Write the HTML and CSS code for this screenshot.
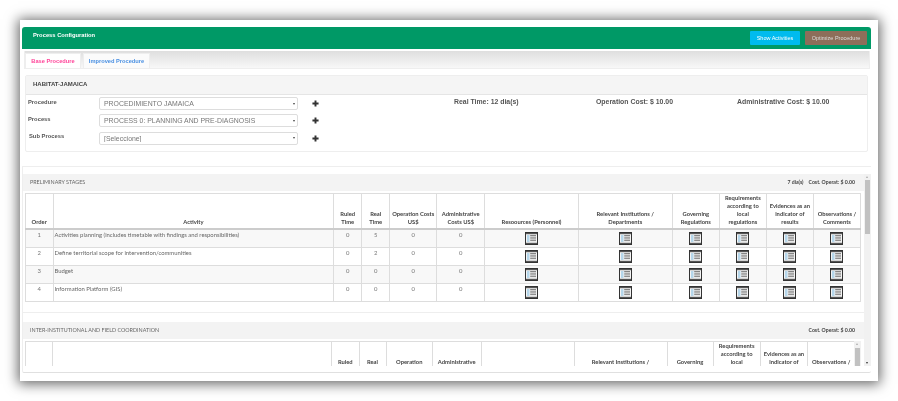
FILE: index.html
```html
<!DOCTYPE html>
<html lang="en">
<head>
    <meta charset="UTF-8">
    <title>Process Configuration</title>
    <link rel="stylesheet" href="styles.css">
</head>
<body>

<svg class="defs" width="0" height="0">
    <symbol id="doc" viewBox="0 0 13 13">
        <rect x="0.5" y="0.5" width="12" height="12" fill="#f4f4f4" stroke="#333"/>
        <rect x="1" y="1" width="11" height="1.2" fill="#555"/>
        <rect x="1" y="10.8" width="11" height="1.2" fill="#555"/>
        <rect x="2" y="3" width="2.5" height="7" fill="#b5d6ea"/>
        <path d="M5.2 3.5h5.8M5.2 5.2h5.8M5.2 6.9h5.8M5.2 8.6h5.8" stroke="#777" stroke-width="0.9" fill="none"/>
    </symbol>
    <symbol id="plus" viewBox="0 0 8 8">
        <path d="M4 0.5v7M0.5 4h7" stroke="#333" stroke-width="2.2" fill="none"/>
    </symbol>
</svg>

<div class="window">
    <div class="topbar">
        <span class="topbar-title">Process Configuration</span>
        <div class="topbar-actions">
            <button type="button" class="btn btn-info">Show Activities</button>
            <button type="button" class="btn btn-brown">Optimize Procedure</button>
        </div>
    </div>

    <div class="tabs">
        <a class="tab tab-active">Base Procedure</a>
        <a class="tab tab-other">Improved Procedure</a>
    </div>

    <div class="info-panel">
        <div class="info-heading">HABITAT-JAMAICA</div>
        <div class="info-body">
            <div class="form-rows">
                <div class="form-row">
                    <label>Procedure</label>
                    <div class="select-wrap"><select><option>PROCEDIMIENTO JAMAICA</option></select></div>
                    <svg class="plus"><use href="#plus"/></svg>
                </div>
                <div class="form-row">
                    <label>Process</label>
                    <div class="select-wrap"><select><option>PROCESS 0: PLANNING AND PRE-DIAGNOSIS</option></select></div>
                    <svg class="plus"><use href="#plus"/></svg>
                </div>
                <div class="form-row">
                    <label class="label-sub">Sub Process</label>
                    <div class="select-wrap"><select><option>[Seleccione]</option></select></div>
                    <svg class="plus"><use href="#plus"/></svg>
                </div>
            </div>
            <div class="stat stat-time">Real Time: 12 dia(s)</div>
            <div class="stat stat-op">Operation Cost: $ 10.00</div>
            <div class="stat">Administrative Cost: $ 10.00</div>
        </div>
    </div>

    <div class="stages">
        <div class="stages-list">
            <div class="stage-heading">
                <span>PRELIMINARY STAGES</span>
                <span class="stage-totals"><span class="stage-days">7 dia(s)</span>Cost. Operat: $ 0.00</span>
            </div>
            <table class="grid grid-first">
                <colgroup>
                    <col class="w-order"><col class="w-activity"><col class="w-time"><col class="w-time"><col class="w-cost"><col class="w-admin">
                    <col class="w-res"><col class="w-wide"><col class="w-cost"><col class="w-cost"><col class="w-cost"><col class="w-cost">
                </colgroup>
                <thead>
                    <tr>
                        <th>Order</th><th>Activity</th><th>Ruled<br>Time</th><th>Real<br>Time</th><th>Operation Costs<br>US$</th><th>Administrative<br>Costs US$</th>
                        <th>Resoources (Personnel)</th><th>Relevant Institutions /<br>Departments</th><th>Governing<br>Regulations</th>
                        <th>Requirements<br>according to<br>local<br>regulations</th><th>Evidences as an<br>indicator of<br>results</th><th>Observations /<br>Comments</th>
                    </tr>
                </thead>
                <tbody>
                    <tr>
                        <td>1</td><td class="activity">Activities planning (includes timetable with findings and responsibilities)</td><td>0</td><td>5</td><td>0</td><td>0</td>
                        <td class="ico"><svg><use href="#doc"/></svg></td><td class="ico"><svg><use href="#doc"/></svg></td><td class="ico"><svg><use href="#doc"/></svg></td>
                        <td class="ico"><svg><use href="#doc"/></svg></td><td class="ico"><svg><use href="#doc"/></svg></td><td class="ico"><svg><use href="#doc"/></svg></td>
                    </tr>
                    <tr>
                        <td>2</td><td class="activity">Define territorial scope for intervention/communities</td><td>0</td><td>2</td><td>0</td><td>0</td>
                        <td class="ico"><svg><use href="#doc"/></svg></td><td class="ico"><svg><use href="#doc"/></svg></td><td class="ico"><svg><use href="#doc"/></svg></td>
                        <td class="ico"><svg><use href="#doc"/></svg></td><td class="ico"><svg><use href="#doc"/></svg></td><td class="ico"><svg><use href="#doc"/></svg></td>
                    </tr>
                    <tr>
                        <td>3</td><td class="activity">Budget</td><td>0</td><td>0</td><td>0</td><td>0</td>
                        <td class="ico"><svg><use href="#doc"/></svg></td><td class="ico"><svg><use href="#doc"/></svg></td><td class="ico"><svg><use href="#doc"/></svg></td>
                        <td class="ico"><svg><use href="#doc"/></svg></td><td class="ico"><svg><use href="#doc"/></svg></td><td class="ico"><svg><use href="#doc"/></svg></td>
                    </tr>
                    <tr>
                        <td>4</td><td class="activity">Information Platform (GIS)</td><td>0</td><td>0</td><td>0</td><td>0</td>
                        <td class="ico"><svg><use href="#doc"/></svg></td><td class="ico"><svg><use href="#doc"/></svg></td><td class="ico"><svg><use href="#doc"/></svg></td>
                        <td class="ico"><svg><use href="#doc"/></svg></td><td class="ico"><svg><use href="#doc"/></svg></td><td class="ico"><svg><use href="#doc"/></svg></td>
                    </tr>
                </tbody>
            </table>
            <div class="stage-foot"></div>

            <div class="stage-heading">
                <span>INTER-INSTITUTIONAL AND FIELD COORDINATION</span>
                <span class="stage-totals">Cost. Operat: $ 0.00</span>
            </div>
            <div class="grid-clip">
                <table class="grid grid-second">
                    <colgroup>
                        <col class="s-order"><col class="s-activity"><col class="s-ruled"><col class="s-real"><col class="s-op"><col class="s-admin">
                        <col class="s-wide"><col class="s-wide"><col class="s-gov"><col class="s-cost"><col class="s-cost"><col class="s-cost">
                    </colgroup>
                    <thead>
                        <tr>
                            <th></th><th></th><th>Ruled<br>Time</th><th>Real<br>Time</th><th>Operation<br>Costs</th><th>Administrative<br>Costs</th>
                            <th></th><th>Relevant Institutions /<br>Departments</th><th>Governing<br>Regulations</th>
                            <th>Requirements<br>according to<br>local<br>regulations</th><th>Evidences as an<br>indicator of<br>results</th><th>Observations /<br>Comments</th>
                        </tr>
                    </thead>
                </table>
                <div class="scrollbar scrollbar-inner"><span class="arrow-up"></span><span class="thumb"></span></div>
            </div>
        </div>
        <div class="scrollbar scrollbar-outer"><span class="arrow-up"></span><span class="thumb"></span><span class="arrow-down"></span></div>
    </div>
</div>

</body>
</html>
```

FILE: styles.css
```css
html, body {
    margin: 0;
    height: 401px;
    overflow: hidden;
    background: #fff;
}
body {
    padding: 20px 20px 0 20px;
    box-sizing: border-box;
    font-family: "Liberation Sans", Arial, sans-serif;
}
.defs {
    position: absolute;
}
.window {
    width: 858px;
    height: 361px;
    box-sizing: border-box;
    padding: 7px 7px 0 2px;
    background: #fff;
    box-shadow: 0 1px 12px 2px rgba(0, 0, 0, 0.6);
    overflow: hidden;
    filter: blur(0.3px);
}

/* green bar */
.topbar {
    height: 22px;
    background: #009966;
    border-radius: 3px 3px 0 0;
    display: flex;
    justify-content: space-between;
    padding: 4px 4px 0 11px;
    box-sizing: border-box;
}
.topbar-title {
    color: #fff;
    font-size: 5.8px;
    font-weight: bold;
    line-height: 8px;
}
.topbar-actions {
    display: flex;
    gap: 5px;
}
.btn {
    height: 14px;
    padding: 0;
    border: none;
    border-radius: 1px;
    color: #fff;
    font-family: "Liberation Sans", Arial, sans-serif;
    font-size: 5.5px;
}
.btn-info {
    width: 50px;
    background: #00bbee;
}
.btn-brown {
    width: 62px;
    background: #8d6e5a;
    color: #ddd;
}

/* tabs */
.tabs {
    margin: 2px 1px 0 2px;
    height: 18px;
    box-sizing: border-box;
    padding: 2px 0 0 0;
    display: flex;
    gap: 2px;
    background: linear-gradient(#dedede, #f8f8f8);
    border: 1px solid #eee;
    border-top: none;
}
.tab {
    display: block;
    background: #fff;
    font-size: 5.7px;
    font-weight: bold;
    line-height: 15px;
    text-align: center;
    border: 1px solid #eee;
    border-bottom: none;
}
.tab-active {
    width: 54px;
    color: #ff4499;
}
.tab-other {
    width: 65px;
    color: #4a90e2;
    background: #fbfbfb;
}

/* procedure block */
.info-panel {
    margin: 6px 3px 0 3px;
    height: 77px;
    box-sizing: border-box;
    border: 1px solid #eee;
    border-radius: 2px;
}
.info-heading {
    height: 19px;
    box-sizing: border-box;
    padding-left: 7px;
    background: #f5f5f5;
    border-bottom: 1px solid #e5e5e5;
    color: #444;
    font-size: 6px;
    font-weight: bold;
    line-height: 17px;
}
.info-body {
    display: flex;
    color: #555;
}
.form-rows {
    width: 428px;
    padding: 2px 0 0 2px;
    box-sizing: border-box;
}
.form-row {
    display: flex;
    align-items: center;
    height: 13px;
    margin-bottom: 4.3px;
}
.form-row label {
    width: 71px;
    font-size: 5.8px;
    font-weight: bold;
    margin-top: -4px;
}
.form-row .label-sub {
    padding-left: 1px;
    width: 70px;
}
.select-wrap {
    position: relative;
    width: 199px;
    height: 13px;
}
.select-wrap::after {
    content: "";
    position: absolute;
    top: 5.5px;
    right: 3px;
    border-left: 1.5px solid transparent;
    border-right: 1.5px solid transparent;
    border-top: 2.5px solid #444;
}
.select-wrap select {
    appearance: none;
    display: block;
    width: 100%;
    height: 13px;
    padding: 0 0 0 4px;
    border: 1px solid #ddd;
    border-radius: 2px;
    background: #fff;
    color: #777;
    font-family: "Liberation Sans", Arial, sans-serif;
    font-size: 6.9px;
}
.plus {
    width: 7px;
    height: 7px;
    margin-left: 14px;
}
.stat {
    padding-top: 2px;
    font-size: 6.9px;
    font-weight: bold;
    line-height: 10px;
    white-space: nowrap;
}
.stat-time {
    width: 142px;
}
.stat-op {
    width: 141px;
}

/* stages */
.stages {
    margin-top: 14px;
    height: 207px;
    border-top: 1px solid #eee;
    border-bottom: 1px solid #e0e0e0;
    border-left: 1px solid #eee;
    border-radius: 0 0 2px 2px;
    padding-top: 7px;
    box-sizing: border-box;
    display: flex;
    align-items: flex-start;
}
.stages-list {
    width: 841px;
    height: 192px;
    overflow: hidden;
}
.stage-heading {
    height: 17px;
    box-sizing: border-box;
    padding: 0 9px 2px 7px;
    display: flex;
    justify-content: space-between;
    align-items: center;
    background: #f3f3f3;
    color: #666;
    font-family: Lato, sans-serif;
    font-size: 5.4px;
}
.stage-totals {
    color: #444;
    font-size: 5.2px;
    font-weight: bold;
}
.stage-days {
    margin-right: 5px;
}
.stage-foot {
    height: 10px;
    margin-bottom: 9px;
    border-bottom: 1px solid #eee;
}

/* tables */
.grid {
    margin: 2px 0 0 2px;
    border-collapse: collapse;
    table-layout: fixed;
    font-family: Lato, sans-serif;
    font-size: 5.9px;
}
.grid-first {
    width: 836px;
}
.grid-second {
    width: 829.5px;
    margin: 0;
}
.grid th, .grid td {
    border: 1px solid #ddd;
    padding: 0 1px;
}
.grid th {
    padding-bottom: 2px;
    vertical-align: bottom;
    color: #444;
    font-size: 5.8px;
    font-weight: bold;
    line-height: 8px;
}
.grid thead tr {
    height: 35px;
}
.grid thead th {
    border-bottom: 2px solid #ccc;
}
.grid td {
    height: 16px;
    padding-top: 1px;
    vertical-align: top;
    text-align: center;
    color: #777;
    line-height: 8px;
}
.grid tbody tr:nth-child(odd) td {
    background: #f8f8f8;
}
.grid td.activity {
    padding-left: 1px;
    text-align: left;
    color: #666;
}
.grid td.ico {
    padding: 2px 0 0 0;
    height: 15px;
}
.ico svg {
    display: block;
    width: 13px;
    height: 13px;
    margin: 0 auto;
}
.w-order { width: 27.5px; }
.w-activity { width: 280.5px; }
.w-time { width: 28px; }
.w-cost { width: 47px; }
.w-admin { width: 48px; }
.w-res { width: 93.5px; }
.w-wide { width: 94px; }

.grid-clip {
    position: relative;
    margin: 2px 0 0 2px;
    height: 25px;
    overflow: hidden;
}
.s-order { width: 27px; }
.s-activity { width: 279px; }
.s-ruled { width: 27.5px; }
.s-real { width: 27px; }
.s-op { width: 46.5px; }
.s-admin { width: 48.5px; }
.s-wide { width: 93px; }
.s-gov { width: 46px; }
.s-cost { width: 47.3px; }

/* fake scrollbars */
.scrollbar {
    width: 7px;
    background: #f1f1f1;
    position: relative;
}
.scrollbar-outer {
    height: 192px;
}
.scrollbar-inner {
    position: absolute;
    top: 0;
    left: 829px;
    height: 25px;
}
.thumb {
    position: absolute;
    left: 1px;
    right: 1px;
    background: #c1c1c1;
}
.scrollbar-outer .thumb {
    top: 6px;
    height: 54px;
}
.scrollbar-inner .thumb {
    top: 7px;
    height: 18px;
}
.arrow-up, .arrow-down {
    position: absolute;
    left: 2px;
    width: 0;
    height: 0;
    border-left: 1.5px solid transparent;
    border-right: 1.5px solid transparent;
}
.arrow-up {
    top: 2px;
    border-bottom: 2px solid #aaa;
}
.arrow-down {
    bottom: 2px;
    border-top: 2px solid #333;
}
```
